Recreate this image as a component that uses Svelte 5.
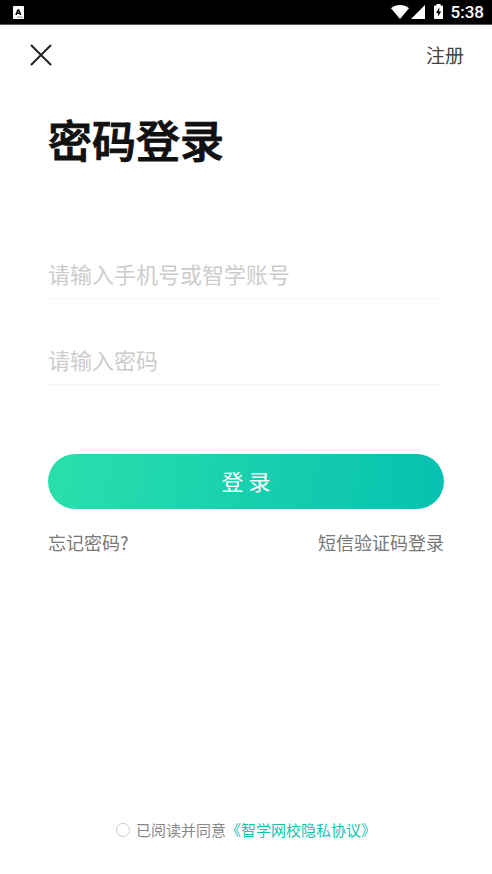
<script>
  let account = $state('');
  let password = $state('');
  let agreed = $state(false);
</script>

<div class="screen">
  <div class="status">
    <svg class="app" viewBox="0 0 12 13" aria-hidden="true">
      <rect width="11" height="13" x="1" y="0" rx="1" fill="#fff" />
      <path d="M3.200 9 5.400 3.200h1.800L9.400 9H7.700L7.300 7.900H5.200L4.900 9ZM5.600 6.700h1.300L6.250 4.900Z" fill="#000" />
      <path d="M5.500 11.200h1M7.500 11.200h1M9.200 11.200h1" stroke="#555" stroke-width="1.200" />
    </svg>
    <div class="system">
      <svg width="18" height="14" viewBox="0 0 18 14" aria-hidden="true">
        <path d="M0 3.200C5 -1 13 -1 18 3.200L9 14Z" fill="#fff" />
      </svg>
      <svg width="14" height="14" viewBox="0 0 14 14" aria-hidden="true">
        <path d="M14 0V14H0Z" fill="#fff" />
      </svg>
      <svg class="battery" width="9" height="16" viewBox="0 0 9 16" aria-hidden="true">
        <path d="M2.500 0h4v1.500H8q1 0 1 1V14q0 1-1 1H1q-1 0-1-1V2.500q0-1 1-1h1.500Z" fill="#fff" />
        <path d="M5.300 3.600 2 8.900h2.100V12.500L7.200 7.400H5.300Z" fill="#000" />
      </svg>
      <span class="time">5:38</span>
    </div>
  </div>

  <header>
    <button class="close" type="button" aria-label="关闭">
      <svg width="22" height="22" viewBox="0 0 22 22" aria-hidden="true">
        <path d="M1.500 1.500l19 19M20.500 1.500l-19 19" stroke="#222" stroke-width="2" stroke-linecap="round" />
      </svg>
    </button>
    <a class="register" href="#register">注册</a>
  </header>

  <main>
    <h1>密码登录</h1>
    <form onsubmit={(e) => e.preventDefault()}>
      <input class="field" type="text" aria-label="账号" placeholder="请输入手机号或智学账号" bind:value={account} />
      <input class="field" type="password" aria-label="密码" placeholder="请输入密码" bind:value={password} />
      <button class="submit" type="submit">登 录</button>
    </form>
    <nav>
      <a href="#forgot">忘记密码?</a>
      <a href="#sms">短信验证码登录</a>
    </nav>
  </main>

  <footer>
    <input id="agree" type="checkbox" bind:checked={agreed} />
    <label for="agree">已阅读并同意</label><a href="#privacy">《智学网校隐私协议》</a>
  </footer>
</div>

<style>
  :global(body) {
    margin: 0;
    background: #fff;
  }
  .screen {
    min-height: 100vh;
    box-sizing: border-box;
    display: flex;
    flex-direction: column;
    background: #fff;
    font-family: 'Noto Sans CJK SC', sans-serif;
  }
  svg {
    display: block;
    fill: none;
  }
  a {
    text-decoration: none;
    color: inherit;
  }
  button,
  input {
    font-family: inherit;
    border: 0;
    padding: 0;
    margin: 0;
    background: none;
  }
  .status {
    height: 24px;
    display: flex;
    align-items: center;
    justify-content: space-between;
    padding: 0 8px 0 12px;
    background: #000;
    border-bottom: 1px solid #555;
  }
  .app {
    width: 12px;
    height: 13px;
  }
  .system {
    display: flex;
    align-items: center;
    gap: 2px;
  }
  .battery {
    margin: 0 6px 0 7px;
  }
  .time {
    font: 500 17px/24px Roboto, sans-serif;
    color: #fff;
  }
  header {
    display: flex;
    align-items: center;
    justify-content: space-between;
    height: 60px;
    padding: 0 28px 0 30px;
  }
  .close {
    cursor: pointer;
  }
  .register {
    font-size: 19px;
    line-height: 28px;
    color: #444;
  }
  main {
    padding: 0 48px;
  }
  h1 {
    margin: 24px 0 80px;
    font-size: 44px;
    line-height: 60px;
    font-weight: 500;
    -webkit-text-stroke: 1px #111;
    color: #111;
  }
  form {
    display: flex;
    flex-direction: column;
  }
  .field {
    height: 50px;
    margin-bottom: 36px;
    padding-bottom: 2px;
    box-sizing: border-box;
    border-bottom: 1px solid #f7f7f7;
    font-size: 22px;
    color: #222;
    outline: none;
    border-radius: 0;
  }
  .field::placeholder {
    color: #ccc;
    opacity: 1;
  }
  .submit {
    height: 55px;
    margin-top: 33px;
    padding-bottom: 4px;
    border-radius: 28px;
    background: linear-gradient(98deg, #2bdfac, #06c1b0);
    font-size: 22px;
    color: #fff;
    cursor: pointer;
  }
  nav {
    display: flex;
    justify-content: space-between;
    margin-top: 19px;
    font-size: 18px;
    line-height: 28px;
    color: #777;
  }
  footer {
    display: flex;
    align-items: center;
    justify-content: center;
    margin-top: auto;
    padding: 32px 0;
    font-size: 15px;
    line-height: 24px;
    color: #888;
  }
  footer input {
    appearance: none;
    width: 14px;
    height: 14px;
    margin-right: 6px;
    box-sizing: border-box;
    border: 1px solid #ccc;
    border-radius: 50%;
  }
  footer input:checked {
    background: #10c4ae;
    border-color: #10c4ae;
  }
  footer a {
    color: #10c4ae;
  }
</style>
